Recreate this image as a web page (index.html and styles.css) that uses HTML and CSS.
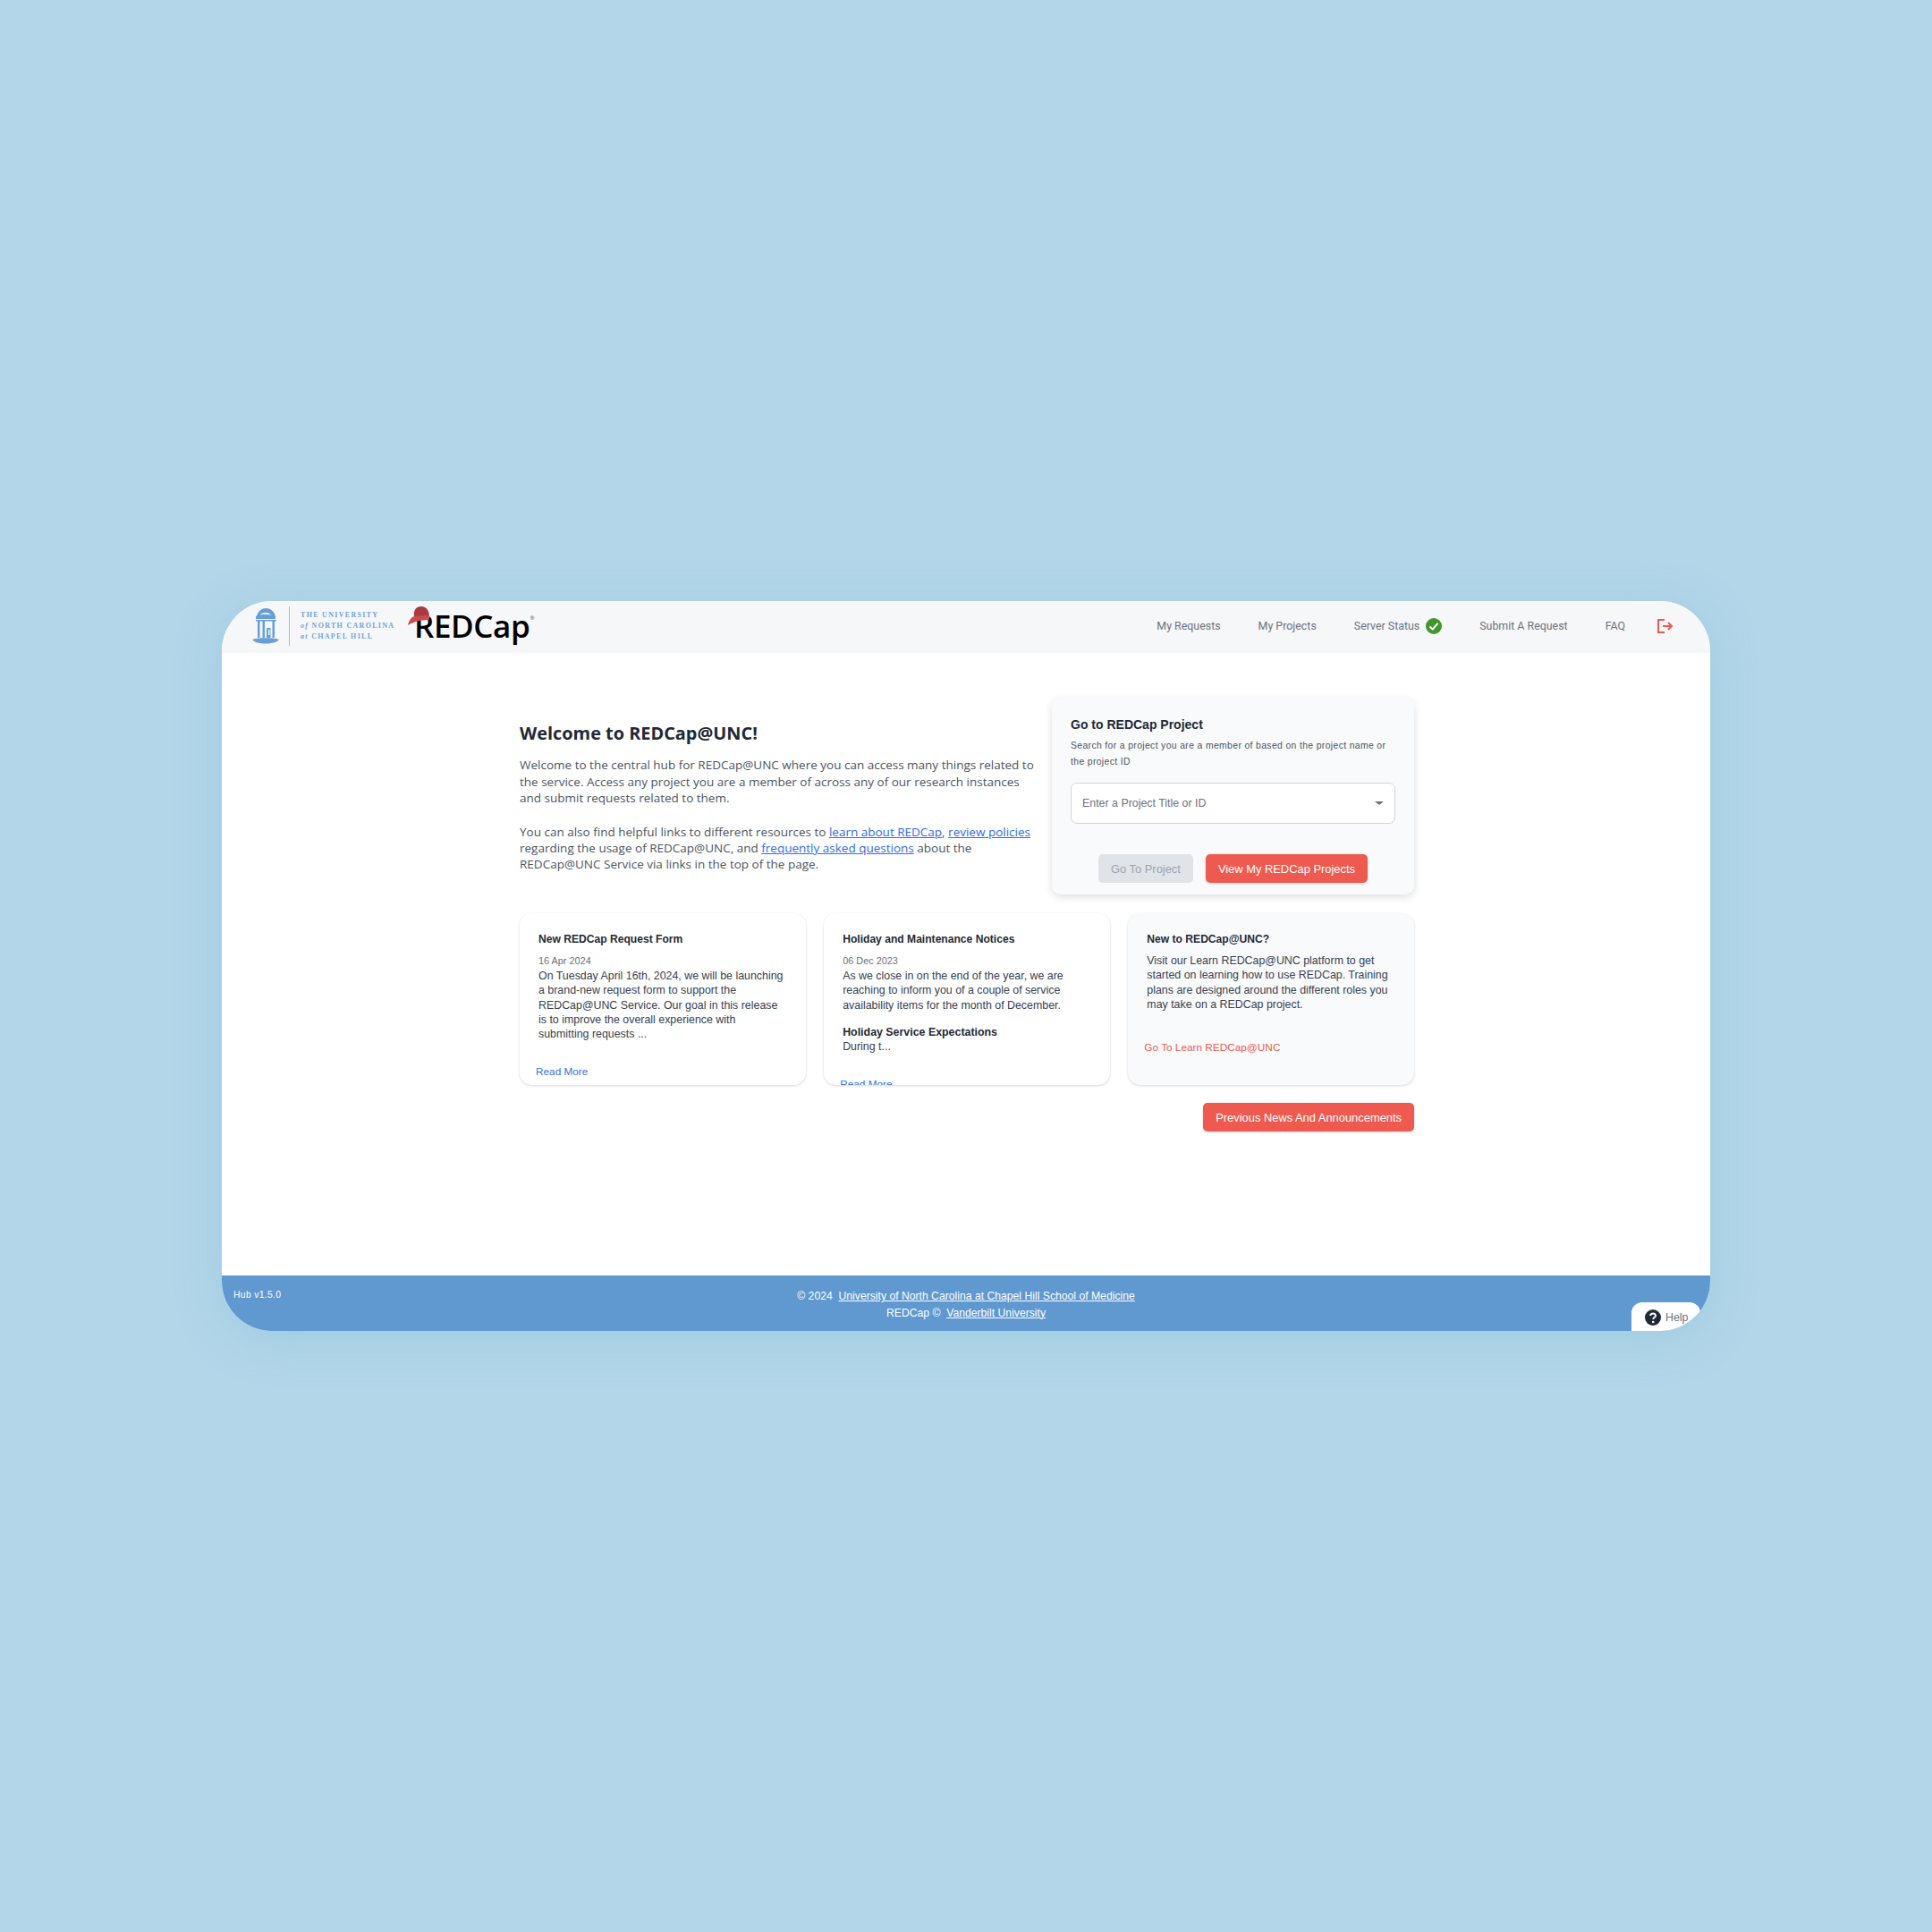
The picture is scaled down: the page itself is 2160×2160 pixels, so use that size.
FILE: index.html
```html
<!DOCTYPE html>
<html lang="en">
<head>
  <meta charset="UTF-8">
  <title>REDCap@UNC Hub</title>
  <link rel="stylesheet" href="styles.css">
</head>
<body>

<div class="window">
  <header class="topbar">
    <div class="logos">
      <svg class="well" viewBox="0 0 30 40" width="30" height="40">
        <path d="M5 10 C6 3 11 0 15 0 C20 0 25 3 26 10 L23 10 C21 6 18 5 15 5 C12 5 9 6 7 10 Z" fill="#659fd6"/>
        <path d="M4 9 C10 6 20 6 26 9 V12 H4 Z" fill="#659fd6"/>
        <path d="M4 13 H27 V14.5 H4 Z" fill="#659fd6"/>
        <path d="M6 14 H8.5 V33 H6 Z M11.5 14 H14 V33 H11.5 Z M22.5 14 H25 V33 H22.5 Z" fill="#659fd6"/>
        <path d="M16 22 H20.5 V33 H16 Z" fill="#659fd6"/>
        <path d="M18 24 H19.5 V30 H18 Z" fill="#f6f7f9"/>
        <path d="M0 35 C6 32.5 24 32.5 30 35 C28 38 22 39.5 15 39.5 C8 39.5 2 38 0 35 Z" fill="#659fd6"/>
      </svg>
      <span class="logo-rule"></span>
      <div class="unc-name">
        <span>THE UNIVERSITY</span>
        <span><i>of</i> NORTH CAROLINA</span>
        <span><i>at</i> CHAPEL HILL</span>
      </div>
      <div class="redcap-logo">
        <svg class="hat" viewBox="0 0 24 21" width="24" height="21">
          <path d="M7 12 C6 4 9 0 15 0 C21 0 24 5 24 12 Z" fill="#ab3a3e"/>
          <path d="M0 21 C1 16 4 12 7 11 L24 10 L24 15 C14 15 7 17 0 21 Z" fill="#cb4a4e"/>
        </svg>
        <span class="redcap-word">REDCap</span><span class="redcap-reg">®</span>
      </div>
    </div>
    <nav class="nav">
      <a>My Requests</a>
      <a>My Projects</a>
      <a class="status">Server Status
        <svg viewBox="0 0 18 18" width="18" height="18">
          <circle cx="9" cy="9" r="9" fill="#43972f"/>
          <path d="M4.5 9.5 L7.7 12.6 L13.5 5.8" fill="none" stroke="#fff" stroke-width="2"/>
        </svg>
      </a>
      <a>Submit A Request</a>
      <a>FAQ</a>
      <svg class="logout" viewBox="0 0 18 18" width="18" height="18">
        <path d="M8 2 H1 V16 H8" fill="none" stroke="#ef5a50" stroke-width="2"/>
        <path d="M6 9 H16 M12 5 L16 9 L12 13" fill="none" stroke="#ef5a50" stroke-width="2"/>
      </svg>
    </nav>
  </header>

  <main class="content">
    <div class="inner">
      <section class="top-row">
        <div class="intro">
          <h1>Welcome to REDCap@UNC!</h1>
          <p>Welcome to the central hub for REDCap@UNC where you can access many things related to the service. Access any project you are a member of across any of our research instances and submit requests related to them.</p>
          <p class="tight">You can also find helpful links to different resources to <a>learn about REDCap</a>, <a>review policies</a> regarding the usage of REDCap@UNC, and <a>frequently asked questions</a> about the REDCap@UNC Service via links in the top of the page.</p>
        </div>
        <div class="goto-card">
          <h2>Go to REDCap Project</h2>
          <p class="goto-desc">Search for a project you are a member of based on the project name or the project ID</p>
          <div class="select">
            <span>Enter a Project Title or ID</span>
            <span class="caret"></span>
          </div>
          <div class="goto-buttons">
            <button class="btn btn-off">Go To Project</button>
            <button class="btn">View My REDCap Projects</button>
          </div>
        </div>
      </section>

      <section class="news">
        <article class="card">
          <h3>New REDCap Request Form</h3>
          <div class="date">16 Apr 2024</div>
          <p>On Tuesday April 16th, 2024, we will be launching a brand-new request form to support the REDCap@UNC Service. Our goal in this release is to improve the overall experience with submitting requests ...</p>
          <a class="read-more first">Read More</a>
        </article>
        <article class="card">
          <h3>Holiday and Maintenance Notices</h3>
          <div class="date">06 Dec 2023</div>
          <p>As we close in on the end of the year, we are reaching to inform you of a couple of service availability items for the month of December.</p>
          <p class="sub"><b>Holiday Service Expectations</b><br>During t...</p>
          <a class="read-more second">Read More</a>
        </article>
        <article class="card card-grey">
          <h3>New to REDCap@UNC?</h3>
          <p>Visit our Learn REDCap@UNC platform to get started on learning how to use REDCap. Training plans are designed around the different roles you may take on a REDCap project.</p>
          <a class="learn-link">Go To Learn REDCap@UNC</a>
        </article>
      </section>

      <div class="prev-row">
        <button class="btn">Previous News And Announcements</button>
      </div>
    </div>
  </main>

  <footer class="footer">
    <div class="version">Hub v1.5.0</div>
    <div class="credits">
      <div>© 2024 &nbsp;<a>University of North Carolina at Chapel Hill School of Medicine</a></div>
      <div>REDCap © &nbsp;<a>Vanderbilt University</a></div>
    </div>
  </footer>

  <div class="help">
    <svg viewBox="0 0 18 18" width="18" height="18">
      <circle cx="9" cy="9" r="9" fill="#1f2937"/>
      <path d="M6.2 7 C6.2 3.6 12 3.6 12 7 C12 9 9.2 9 9.2 11" fill="none" stroke="#fff" stroke-width="2"/>
      <circle cx="9.2" cy="14" r="1.3" fill="#fff"/>
    </svg>
    Help
  </div>
</div>

</body>
</html>
```

FILE: styles.css
```css
body {
  margin: 0;
  min-height: 2160px;
  background: #b3d6e9;
  display: flex;
  align-items: center;
  justify-content: center;
  font-family: "Liberation Sans", Arial, sans-serif;
  color: #374151;
}

.window {
  position: relative;
  width: 1664px;
  height: 816px;
  background: white;
  border-radius: 56px;
  overflow: hidden;
  display: flex;
  flex-direction: column;
  box-shadow: 0 8px 50px rgba(120, 180, 210, 0.35);
}

/* top bar */
.topbar {
  height: 58px;
  box-sizing: border-box;
  background: #f6f7f9;
  display: flex;
  align-items: center;
  justify-content: space-between;
  padding: 0 41px 3px 34px;
}
.logos { display: flex; align-items: center; padding-top: 1px; }
.logo-rule {
  width: 1px;
  height: 44px;
  background: #9dc0e0;
  margin: 0 12px 0 11px;
}
.unc-name {
  display: flex;
  flex-direction: column;
  font-family: "Liberation Serif", serif;
  font-size: 8px;
  font-weight: bold;
  line-height: 11.8px;
  letter-spacing: 1.3px;
  color: #6fa5d8;
  width: 120px;
}
.redcap-logo {
  position: relative;
  display: flex;
  align-items: flex-start;
  height: 44px;
  padding-left: 7px;
  font-family: "Open Sans", sans-serif;
  color: #000;
}
.redcap-word {
  font-size: 35px;
  font-weight: 600;
  line-height: 44px;
  letter-spacing: -0.4px;
}
.redcap-reg { font-size: 6px; line-height: 26px; color: #555; }
.hat { position: absolute; left: 0; top: 0; }

.nav {
  display: flex;
  align-items: center;
  gap: 42px;
  font-family: Roboto, sans-serif;
  font-size: 12.4px;
  color: #6b7280;
}
.status { display: flex; align-items: center; gap: 7px; }
.logout { margin-left: -6px; }

/* main */
.content { flex: 1; padding-left: 2px; }
.inner { width: 1000px; margin: 0 auto; padding-top: 50px; }
.top-row { display: flex; justify-content: space-between; }
.intro { width: 580px; padding-top: 26px; }
.intro h1 {
  margin: 0 0 12px;
  font-family: "Open Sans", sans-serif;
  font-size: 19.9px;
  font-weight: 700;
  line-height: 28px;
  color: #1f2937;
}
.intro p {
  margin: 0 0 19px;
  font-family: "Open Sans", sans-serif;
  font-size: 13.5px;
  line-height: 18.6px;
  color: #4b5563;
}
.intro p.tight { line-height: 18px; }
.intro a { color: #2f6bf0; text-decoration: underline; }

.goto-card {
  width: 363px;
  height: 178px;
  padding: 21px;
  background: #f9fafb;
  border-radius: 10px;
  box-shadow: 0 3px 10px rgba(0, 0, 0, 0.13);
}
.goto-card h2 {
  margin: 0;
  font-size: 14px;
  line-height: 18px;
  font-weight: bold;
  color: #1f2937;
}
.goto-desc {
  margin: 6px 0 14px;
  font-size: 10.4px;
  line-height: 18px;
  color: #4b5563;
  letter-spacing: 0.36px;
}
.select {
  height: 44px;
  padding: 0 12px;
  background: white;
  border: 1px solid #d1d5db;
  border-radius: 7px;
  display: flex;
  align-items: center;
  justify-content: space-between;
  font-size: 12.4px;
  color: #6b7280;
}
.caret {
  border-left: 5px solid transparent;
  border-right: 5px solid transparent;
  border-top: 4px solid #6b7280;
}
.goto-buttons {
  display: flex;
  justify-content: center;
  gap: 14px;
  margin-top: 34px;
}

.btn {
  height: 32px;
  padding: 0 14px;
  border: none;
  border-radius: 5px;
  background: #ee5a4f;
  color: white;
  font-family: "Liberation Sans", Arial, sans-serif;
  font-size: 12.9px;
  box-shadow: 0 1px 3px rgba(0, 0, 0, 0.15);
}
.btn-off {
  background: #e0e3e8;
  color: #9ca3af;
  box-shadow: none;
}

/* news cards */
.news {
  display: grid;
  grid-template-columns: repeat(3, 1fr);
  gap: 20.5px;
  margin-top: 21px;
}
.card {
  position: relative;
  height: 192px;
  box-sizing: border-box;
  padding: 20px 21px;
  background: white;
  border-radius: 14px;
  overflow: hidden;
  box-shadow: 0 1px 3px rgba(0, 0, 0, 0.16);
}
.card h3 {
  margin: 0;
  font-size: 12.1px;
  line-height: 18px;
  font-weight: bold;
  color: #1f2937;
}
.date {
  margin-top: 7px;
  font-size: 10.9px;
  line-height: 16px;
  color: #6b7280;
}
.card p {
  margin: 1px 0 0;
  font-size: 12.4px;
  line-height: 16.3px;
  color: #374151;
}
.card p.sub { margin-top: 14px; }
.card p.sub b { color: #1f2937; }
.read-more {
  position: absolute;
  left: 18px;
  font-size: 11.8px;
  color: #3b6fd6;
}
.read-more.first { top: 170px; }
.read-more.second { top: 184px; }
.card-grey { background: #f9fafb; }
.card-grey p { margin-top: 7px; }
.learn-link {
  display: block;
  margin: 33px 0 0 -3px;
  font-size: 11.8px;
  color: #f05a50;
}
.prev-row { display: flex; justify-content: flex-end; margin-top: 20px; }

/* footer */
.footer {
  height: 62px;
  background: #5f99d0;
  color: white;
  position: relative;
  font-size: 12.2px;
}
.version {
  position: absolute;
  left: 13px;
  top: 16px;
  font-size: 10.4px;
  letter-spacing: 0.3px;
}
.credits {
  padding-top: 14px;
  text-align: center;
  line-height: 18.5px;
}
.credits a { text-decoration: underline; }

.help {
  position: absolute;
  right: 11px;
  bottom: 0;
  width: 77px;
  height: 32px;
  box-sizing: border-box;
  padding: 2px 0 0 15px;
  background: white;
  border-radius: 12px 12px 0 0;
  display: flex;
  align-items: center;
  gap: 5px;
  font-size: 12.4px;
  color: #6b7280;
}
```
